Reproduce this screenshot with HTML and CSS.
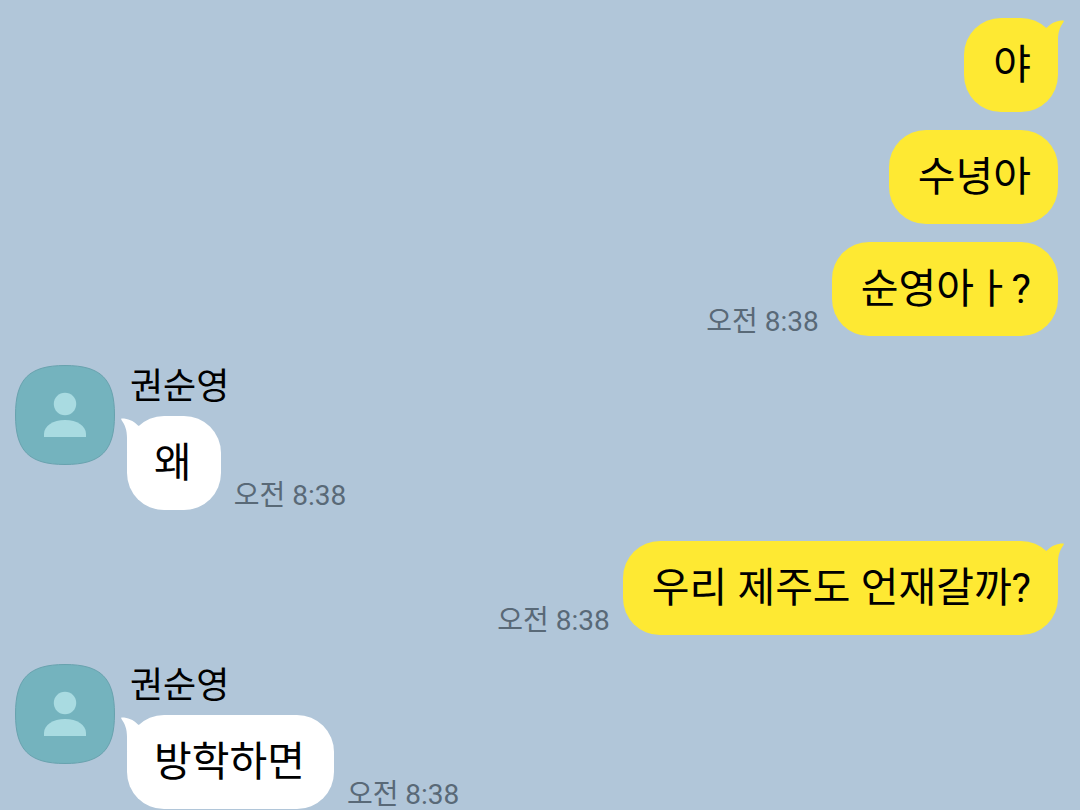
FILE: index.html
```
<!DOCTYPE html>
<html lang="ko">
<head>
    <meta charset="UTF-8">
    <meta name="viewport" content="width=device-width, initial-scale=1.0">
    <title>권순영</title>
    <link rel="stylesheet" href="styles.css">
</head>
<body>

    <!-- Shared shapes -->
    <svg class="symbols" aria-hidden="true">
        <symbol id="avatar" viewBox="0 0 100 100">
            <path class="avatar-bg" d="M50 .5C86 .5 99.500 14 99.500 50C99.500 86 86 99.500 50 99.500C14 99.500 .5 86 .5 50C.5 14 14 .5 50 .5Z"/>
            <circle class="avatar-person" cx="50" cy="39" r="11.200"/>
            <path class="avatar-person" d="M29 72V69C29 61 38 55 50 55S71 61 71 69V72Z"/>
        </symbol>
        <symbol id="tail" viewBox="0 0 30 36">
            <path d="M0 16L13 9.500C18 4.500 23 2.500 29 2.500C30 2.500 30 3 29.500 4C26 9 24 14 24 22V36H0Z"/>
        </symbol>
    </svg>

    <main class="chat">
        <section class="group mine">
            <div class="row">
                <p class="bubble">야<svg class="tail" aria-hidden="true"><use href="#tail"/></svg></p>
            </div>
            <div class="row">
                <p class="bubble">수녕아</p>
            </div>
            <div class="row">
                <p class="bubble">순영아ㅏ?</p>
                <time class="time">오전 8:38</time>
            </div>
        </section>

        <section class="group other">
            <svg class="avatar" aria-hidden="true"><use href="#avatar"/></svg>
            <div class="messages">
                <h2 class="name">권순영</h2>
                <div class="row">
                    <p class="bubble">왜<svg class="tail" aria-hidden="true"><use href="#tail"/></svg></p>
                    <time class="time">오전 8:38</time>
                </div>
            </div>
        </section>

        <section class="group mine">
            <div class="row">
                <p class="bubble">우리 제주도 언재갈까?<svg class="tail" aria-hidden="true"><use href="#tail"/></svg></p>
                <time class="time">오전 8:38</time>
            </div>
        </section>

        <section class="group other">
            <svg class="avatar" aria-hidden="true"><use href="#avatar"/></svg>
            <div class="messages">
                <h2 class="name">권순영</h2>
                <div class="row">
                    <p class="bubble">방학하면<svg class="tail" aria-hidden="true"><use href="#tail"/></svg></p>
                    <time class="time">오전 8:38</time>
                </div>
            </div>
        </section>
    </main>

</body>
</html>
```
FILE: styles.css
```
* {
    box-sizing: border-box;
}

body {
    margin: 0;
    background-color: #b1c6d9;
    color: #000;
    font-family: Roboto, "Noto Sans CJK KR", sans-serif;
}

.symbols {
    position: absolute;
    width: 0;
    height: 0;
}

.chat {
    display: flex;
    flex-direction: column;
    gap: 29px;
    padding: 18px 22px 0 15px;
}

.group {
    display: flex;
}

/* My messages stack on the right */
.mine {
    flex-direction: column;
    gap: 18px;
}

.other {
    gap: 12px;
    padding-bottom: 2px;
}

.row {
    display: flex;
    align-items: flex-end;
    gap: 13px;
}

.mine .row {
    flex-direction: row-reverse;
}

.bubble {
    position: relative;
    margin: 0;
    padding: 17px 29px 17px 27px;
    border-radius: 37px;
    font-size: 41px;
    line-height: 60px;
}

.mine .bubble {
    padding: 17px 27px 17px 29px;
    background-color: #fee933;
}

.other .bubble {
    background-color: #fff;
}

.tail {
    position: absolute;
    top: 0;
    right: -6px;
    width: 30px;
    height: 36px;
    fill: #fee933;
}

.other .tail {
    right: auto;
    left: -6px;
    fill: #fff;
    transform: scaleX(-1);
}

.time {
    flex-shrink: 0;
    color: #596977;
    font-size: 28px;
    line-height: 28px;
}

.name {
    margin: 0;
    padding: 0 3px 7px;
    font-size: 36px;
    font-weight: 400;
    line-height: 44px;
}

.avatar {
    flex-shrink: 0;
    width: 100px;
    height: 100px;
}

.avatar-bg {
    fill: #74b3be;
    stroke: #68a2ae;
}

.avatar-person {
    fill: #a9dbe1;
}
```
